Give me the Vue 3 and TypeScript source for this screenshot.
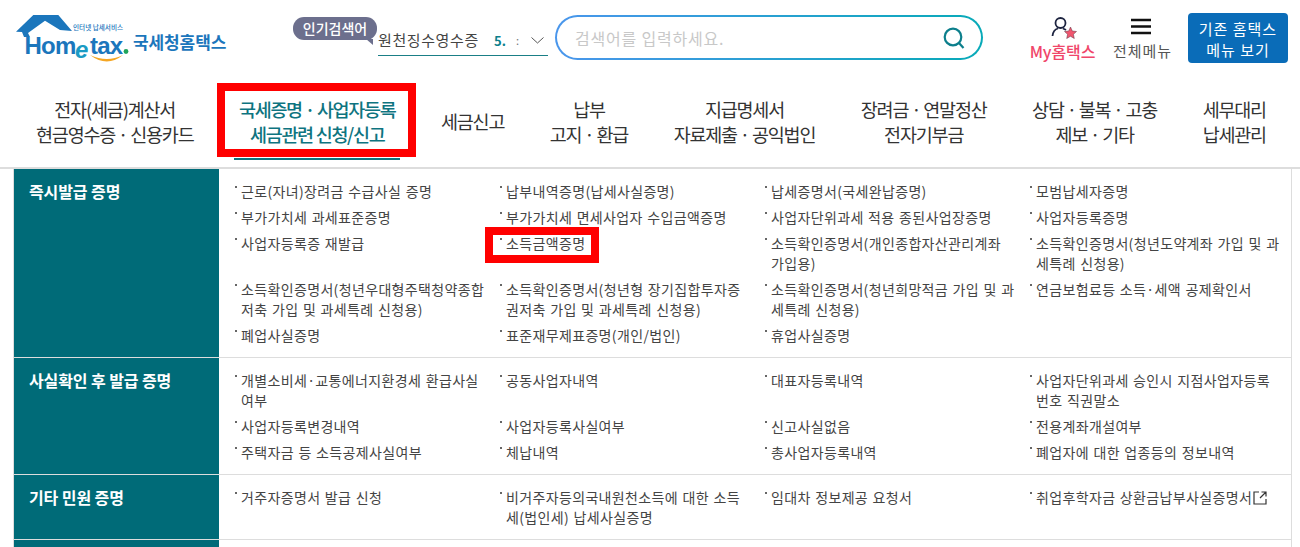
<script setup lang="ts">
interface Item { text: string; ext?: boolean }
interface Section { title: string; items: Item[] }

const nav: { lines: string[]; active?: boolean }[] = [
  { lines: ['전자(세금)계산서', '현금영수증 · 신용카드'] },
  { lines: ['국세증명 · 사업자등록', '세금관련 신청/신고'], active: true },
  { lines: ['세금신고'] },
  { lines: ['납부', '고지 · 환급'] },
  { lines: ['지급명세서', '자료제출 · 공익법인'] },
  { lines: ['장려금 · 연말정산', '전자기부금'] },
  { lines: ['상담 · 불복 · 고충', '제보 · 기타'] },
  { lines: ['세무대리', '납세관리'] },
]

const sections: Section[] = [
  {
    title: '즉시발급 증명',
    items: [
      { text: '근로(자녀)장려금 수급사실 증명' },
      { text: '납부내역증명(납세사실증명)' },
      { text: '납세증명서(국세완납증명)' },
      { text: '모범납세자증명' },
      { text: '부가가치세 과세표준증명' },
      { text: '부가가치세 면세사업자 수입금액증명' },
      { text: '사업자단위과세 적용 종된사업장증명' },
      { text: '사업자등록증명' },
      { text: '사업자등록증 재발급' },
      { text: '소득금액증명' },
      { text: '소득확인증명서(개인종합자산관리계좌 가입용)' },
      { text: '소득확인증명서(청년도약계좌 가입 및 과세특례 신청용)' },
      { text: '소득확인증명서(청년우대형주택청약종합저축 가입 및 과세특례 신청용)' },
      { text: '소득확인증명서(청년형 장기집합투자증권저축 가입 및 과세특례 신청용)' },
      { text: '소득확인증명서(청년희망적금 가입 및 과세특례 신청용)' },
      { text: '연금보험료등 소득·세액 공제확인서' },
      { text: '폐업사실증명' },
      { text: '표준재무제표증명(개인/법인)' },
      { text: '휴업사실증명' },
    ],
  },
  {
    title: '사실확인 후 발급 증명',
    items: [
      { text: '개별소비세·교통에너지환경세 환급사실여부' },
      { text: '공동사업자내역' },
      { text: '대표자등록내역' },
      { text: '사업자단위과세 승인시 지점사업자등록번호 직권말소' },
      { text: '사업자등록변경내역' },
      { text: '사업자등록사실여부' },
      { text: '신고사실없음' },
      { text: '전용계좌개설여부' },
      { text: '주택자금 등 소득공제사실여부' },
      { text: '체납내역' },
      { text: '총사업자등록내역' },
      { text: '폐업자에 대한 업종등의 정보내역' },
    ],
  },
  {
    title: '기타 민원 증명',
    items: [
      { text: '거주자증명서 발급 신청' },
      { text: '비거주자등의국내원천소득에 대한 소득세(법인세) 납세사실증명' },
      { text: '임대차 정보제공 요청서' },
      { text: '취업후학자금 상환금납부사실증명서', ext: true },
    ],
  },
]
</script>

<template>
  <div class="page">
    <header class="top">
      <svg class="logo" width="130" height="62" viewBox="0 0 130 62" aria-label="Hometax">
        <path d="M1 17.700 L18.300 1 H43.300 L57 17 L45 16 L30 6.700 L13 19 L15 23 H9 L7 18 Z" fill="#1b76bc" />
        <text x="9.500" y="40" class="lg-home">Hom</text>
        <text x="60" y="44" class="lg-e">e</text>
        <text x="75" y="40" class="lg-tax">tax</text>
        <circle cx="111" cy="37.500" r="2.400" fill="#1fa45b" />
        <path d="M75 41 Q92 54 108 41 Q92 49 75 41 Z" fill="#f5a623" />
        <text x="58" y="16" class="lg-small">인터넷 납세서비스</text>
      </svg>
      <span class="brand">국세청홈택스</span>

      <div class="popular">
        <span class="badge">인기검색어</span>
        <div class="roll">
          <span class="roll-text">원천징수영수증</span>
          <b class="roll-no">5.</b>
          <span class="roll-faint">:</span>
          <svg class="chev" width="13" height="7" viewBox="0 0 13 7"><path d="M0.500 0.500 L6.500 6 L12.500 0.500" fill="none" stroke="#555" stroke-width="1" /></svg>
        </div>
      </div>

      <div class="search">
        <div class="search-in">
          <span class="ph">검색어를 입력하세요.</span>
          <svg width="24" height="24" viewBox="0 0 24 24"><circle cx="11" cy="11" r="8.300" fill="none" stroke="#0c7f8c" stroke-width="2.200" /><path d="M17 17 L21.500 22" stroke="#0c7f8c" stroke-width="2.200" /></svg>
        </div>
      </div>

      <div class="tool my">
        <svg width="28" height="23" viewBox="0 0 28 23">
          <circle cx="11.500" cy="7" r="5" fill="none" stroke="#1d2440" stroke-width="1.800" />
          <path d="M3.500 20 C4 15 7 13 9 12.500 M14 12.500 C15 13 16 13.300 17 14" fill="none" stroke="#1d2440" stroke-width="1.800" />
          <path d="M21.500 11 L23.300 15 L27.500 15.500 L24.400 18.300 L25.300 22.500 L21.500 20.300 L17.700 22.500 L18.600 18.300 L15.500 15.500 L19.700 15 Z" fill="#f0566e" stroke="#5a3040" stroke-width="0.500" />
        </svg>
        <span class="my-label">My홈택스</span>
      </div>
      <div class="tool all">
        <svg class="burger" width="20" height="23" viewBox="0 0 20 23"><path d="M0 4 H20 M0 10.500 H20 M0 17 H20" stroke="#111" stroke-width="2.400" /></svg>
        <span class="all-label">전체메뉴</span>
      </div>
      <div class="old">기존 홈택스<br />메뉴 보기</div>
    </header>

    <nav class="nav">
      <div v-for="(n, i) in nav" :key="i" class="nav-item" :class="{ active: n.active }">
        <span v-for="l in n.lines" :key="l">{{ l }}</span>
      </div>
    </nav>

    <div class="table">
      <section v-for="s in sections" :key="s.title" class="row">
        <h3 class="title">{{ s.title }}</h3>
        <ul class="list">
          <li v-for="it in s.items" :key="it.text">
            {{ it.text }}<svg v-if="it.ext" class="ext" width="14" height="14" viewBox="0 0 14 14"><path d="M6 1 H1 V13 H13 V8 M7 7 L13 1 M8.500 1 H13 V5.500" fill="none" stroke="#333" stroke-width="1.200" /></svg>
          </li>
        </ul>
      </section>
      <div class="tail"></div>
    </div>

    <div class="mark mark-nav"></div>
    <div class="mark mark-item"></div>
  </div>
</template>

<style>
html, body { margin: 0; padding: 0; background: #fff; overflow: hidden; }
</style>

<style scoped>
.page {
  position: relative;
  width: 1300px;
  height: 547px;
  overflow: hidden;
  font-family: "Noto Sans CJK KR", "Noto Sans", sans-serif;
  color: #333;
}
.top {
  display: flex;
  align-items: flex-start;
  height: 78px;
  padding-left: 15px;
  box-sizing: border-box;
}
.logo { margin-top: 14px; flex: none; }
.lg-home { font: 700 24px "Liberation Sans", sans-serif; fill: #1b76bc; letter-spacing: -0.8px; }
.lg-e { font: italic 700 24px "Liberation Sans", sans-serif; fill: #1b9bc4; }
.lg-tax { font: 700 24px "Liberation Sans", sans-serif; fill: #1b76bc; letter-spacing: -0.8px; }
.lg-small { font: 500 6.600px "Noto Sans CJK KR", sans-serif; fill: #1b76bc; }
.brand {
  margin: 30px 0 0 -12px;
  font-size: 17px;
  line-height: 24px;
  font-weight: 700;
  letter-spacing: -0.1px;
  color: #1b76bc;
  white-space: nowrap;
  width: 92px;
  flex: none;
}
.popular { position: relative; width: 255px; margin-left: 68px; height: 60px; flex: none; }
.badge {
  position: absolute;
  left: 0;
  top: 17px;
  width: 84px;
  height: 23px;
  border-radius: 11px;
  background: #6c6f8d;
  color: #fff;
  font-size: 14px;
  line-height: 22px;
  font-weight: 500;
  text-align: center;
}
.badge::after {
  content: "";
  position: absolute;
  right: 4px;
  bottom: -5px;
  border-top: 6px solid #6c6f8d;
  border-left: 7px solid transparent;
}
.roll {
  position: absolute;
  left: 85px;
  top: 25px;
  width: 170px;
  height: 30px;
  border-bottom: 1px solid #1a7f86;
  display: flex;
  align-items: center;
  font-size: 14px;
}
.roll-text { color: #444; font-size: 15px; letter-spacing: 0.6px; width: 116px; white-space: nowrap; line-height: 24px; }
.roll-no { color: #0c7f8c; font-size: 13px; width: 22px; }
.roll-faint { color: #777; font-size: 11px; width: 15px; }
.chev { margin-top: 1px; }
.search {
  margin: 15px 0 0 7px;
  width: 428px;
  height: 45px;
  flex: none;
  padding: 2px;
  box-sizing: border-box;
  border-radius: 23px;
  background: linear-gradient(90deg, #4a96ec, #08aab8);
}
.search-in {
  height: 100%;
  border-radius: 21px;
  background: #fff;
  display: flex;
  align-items: center;
  justify-content: space-between;
  padding: 0 15px 0 18px;
}
.ph { color: #c8c8c8; font-size: 16px; letter-spacing: 0.8px; }
.tool { flex: none; display: flex; flex-direction: column; align-items: center; }
.my { width: 67px; margin: 16px 0 0 46px; }
.my-label { color: #f0466a; font-size: 16px; font-weight: 500; line-height: 22px; margin-top: 1px; letter-spacing: -0.1px; white-space: nowrap; }
.all { width: 59px; margin: 16px 0 0 17px; }
.burger { margin-left: -3px; }
.all-label { color: #555; font-size: 15px; line-height: 22px; margin-top: 1px; white-space: nowrap; letter-spacing: 0.9px; }
.old {
  flex: none;
  width: 100px;
  height: 50px;
  margin: 13px 0 0 16px;
  background: #0a6cb8;
  border-radius: 4px;
  color: #fff;
  font-size: 15px;
  line-height: 21px;
  padding-top: 5px;
  box-sizing: border-box;
  text-align: center;
  letter-spacing: 1px;
  white-space: nowrap;
}
.nav {
  height: 91px;
  box-sizing: border-box;
  border-bottom: 2px solid #ddd;
  display: flex;
  gap: 45.500px;
  padding-left: 36px;
}
.nav-item {
  position: relative;
  display: flex;
  flex-direction: column;
  justify-content: center;
  align-items: center;
  height: 63px;
  margin-top: 12px;
  font-size: 18.500px;
  line-height: 25px;
  letter-spacing: -1.200px;
  color: #333;
  white-space: nowrap;
}
.nav-item.active { color: #0e7480; font-weight: 500; letter-spacing: -1.300px; }
.nav-item.active::after {
  content: "";
  position: absolute;
  left: -5px;
  right: -5px;
  bottom: -7px;
  height: 2px;
  background: #0e7480;
}
.table {
  margin: 0 8px 0 13px;
  border-left: 1px solid #ddd;
  border-right: 1px solid #ddd;
}
.row {
  display: grid;
  grid-template-columns: 205px 1fr;
  border-bottom: 1px solid #ddd;
}
.title {
  margin: 0;
  padding: 9px 15px 0;
  background: #006b78;
  color: #fff;
  font-size: 16px;
  line-height: 26px;
  font-weight: 700;
  letter-spacing: -0.1px;
}
.list {
  list-style: none;
  margin: 0;
  padding: 9px 0 9px 16px;
  display: grid;
  grid-template-columns: repeat(4, 265px);
}
.list li {
  position: relative;
  padding: 3px 14px 3px 6px;
  font-size: 14px;
  line-height: 20px;
  color: #444;
  letter-spacing: 0.35px;
  word-spacing: 1px;
  word-break: break-all;
}
.list li::before {
  content: "";
  position: absolute;
  left: 0;
  top: 8px;
  width: 2px;
  height: 2px;
  background: #666;
}
.ext { vertical-align: -2px; margin-left: 1px; }
.tail {
  height: 12px;
  width: 205px;
  background: #006b78;
}
.mark { position: absolute; border: 8px solid #f00; box-sizing: border-box; pointer-events: none; }
.mark-nav { left: 217px; top: 83px; width: 199px; height: 74px; }
.mark-item { left: 485px; top: 227px; width: 114px; height: 36px; }
</style>
